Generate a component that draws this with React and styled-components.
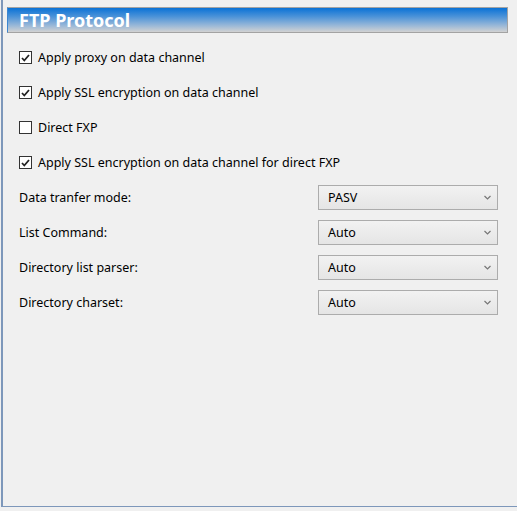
import styled, { createGlobalStyle } from "styled-components";

const GlobalStyle = createGlobalStyle`
  html, body {
    margin: 0;
    padding: 0;
    background: #f0f0f0;
  }
  body {
    font-family: "Noto Sans", "Open Sans", sans-serif;
    font-size: 12.5px;
    color: #000;
  }
`;

const Frame = styled.div`
  width: 517px;
  height: 511px;
  box-sizing: border-box;
  padding-bottom: 4px;
  background: #f0f0f0;
`;

const Panel = styled.div`
  height: 100%;
  width: 516px;
  box-sizing: border-box;
  margin-left: 1px;
  border-left: 2px solid #7d97ba;
  border-bottom: 1px solid #7d97ba;
  padding: 7px 9px 0 4px;
`;

const Header = styled.div`
  height: 26px;
  box-sizing: border-box;
  border: 1px solid #a3a3a3;
  border-left-color: #3d86d0;
  background: linear-gradient(to bottom, #0a72d6 0%, #4a92d8 35%, #93b5d8 70%, #d2d2d2 100%);
  padding-left: 11px;
  display: flex;
  align-items: center;
`;

const Title = styled.h1`
  margin: 0;
  font-family: "Noto Sans", sans-serif;
  font-size: 18px;
  font-weight: 700;
  color: #fff;
`;

const Body = styled.div`
  padding: 7px 0 0 12px;
  display: flex;
  flex-direction: column;
`;

const CheckRow = styled.label`
  height: 35px;
  display: flex;
  align-items: center;
  gap: 6px;
`;

const Box = styled.span`
  width: 13px;
  height: 13px;
  box-sizing: border-box;
  border: 1px solid #333;
  background: #fff;
  display: flex;
  align-items: center;
  justify-content: center;
`;

const FieldRow = styled.div`
  height: 35px;
  display: flex;
  align-items: center;
  justify-content: space-between;
  padding-right: 10px;
`;

const Select = styled.div`
  width: 180px;
  height: 25px;
  box-sizing: border-box;
  border: 1px solid #acacac;
  background: linear-gradient(to bottom, #f2f2f2, #e5e5e5);
  display: flex;
  align-items: center;
  justify-content: space-between;
  padding: 0 6px 0 9px;
`;

function Check({ checked }) {
  return (
    <Box>
      {checked && (
        <svg width="9" height="8" viewBox="0 0 9 8">
          <path d="M1 4 L3.3 6.5 L8 1" fill="none" stroke="#222" strokeWidth="1.8" />
        </svg>
      )}
    </Box>
  );
}

const checks = [
  ["Apply proxy on data channel", true],
  ["Apply SSL encryption on data channel", true],
  ["Direct FXP", false],
  ["Apply SSL encryption on data channel for direct FXP", true],
];

const fields = [
  ["Data tranfer mode:", "PASV"],
  ["List Command:", "Auto"],
  ["Directory list parser:", "Auto"],
  ["Directory charset:", "Auto"],
];

export default function App() {
  return (
    <Frame>
      <GlobalStyle />
      <Panel>
        <Header>
          <Title>FTP Protocol</Title>
        </Header>
        <Body>
          {checks.map(([text, on]) => (
            <CheckRow key={text}>
              <Check checked={on} />
              {text}
            </CheckRow>
          ))}
          {fields.map(([label, value]) => (
            <FieldRow key={label}>
              <span>{label}</span>
              <Select>
                <span>{value}</span>
                <svg width="7" height="5" viewBox="0 0 7 5">
                  <path d="M0.5 1 L3.5 4 L6.5 1" fill="none" stroke="#777" strokeWidth="1.2" />
                </svg>
              </Select>
            </FieldRow>
          ))}
        </Body>
      </Panel>
    </Frame>
  );
}
